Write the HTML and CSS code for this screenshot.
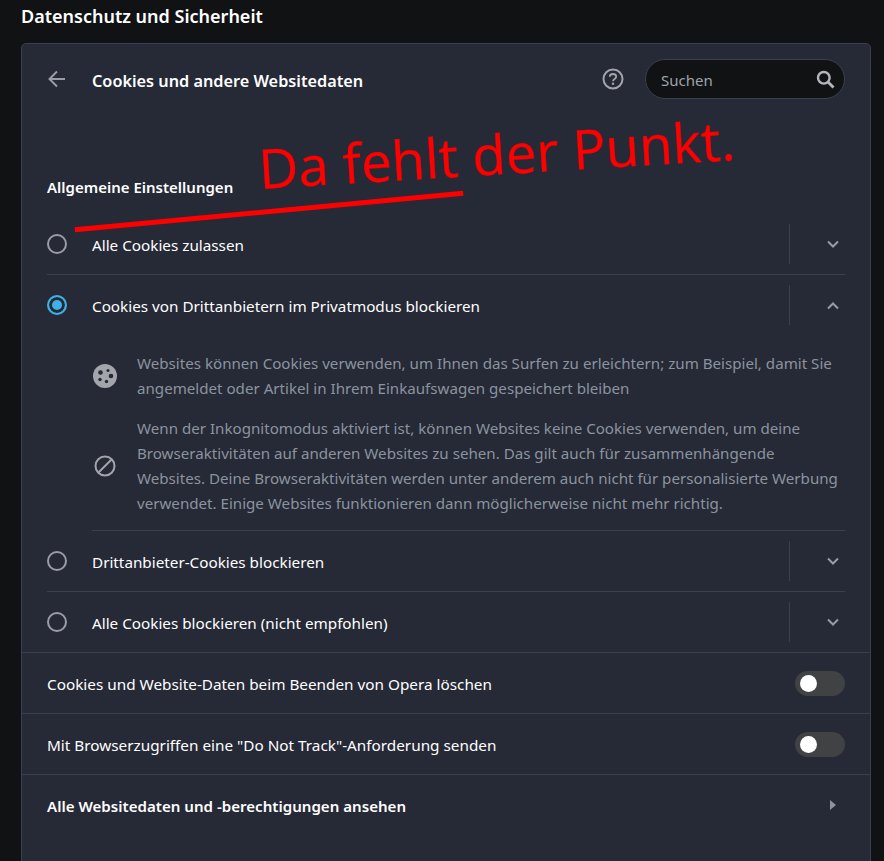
FILE: index.html
```html
<!DOCTYPE html>
<html lang="de">
<head>
    <meta charset="UTF-8">
    <title>Cookies und andere Websitedaten</title>
    <link rel="stylesheet" href="styles.css">
</head>
<body>
    <h1 class="page-title">Datenschutz und Sicherheit</h1>

    <div class="card">
        <!-- Header -->
        <div class="card-head">
            <svg class="back-icon" width="20" height="20" viewBox="0 0 20 20"><path d="M18 10H3M10 2.500 2.500 10l7.500 7.500" fill="none" stroke="#9a9ca6" stroke-width="2"/></svg>
            <h2 class="card-title">Cookies und andere Websitedaten</h2>
            <svg class="help-icon" width="22" height="22" viewBox="0 0 22 22">
                <circle cx="11" cy="11" r="9.500" fill="none" stroke="#a3a5ad" stroke-width="2"/>
                <path d="M7.800 8.800C7.800 6.800 9.300 6 11 6c1.800 0 3.200 1 3.200 2.700 0 2.300-3.200 2.300-3.200 4.500" fill="none" stroke="#a3a5ad" stroke-width="1.800"/>
                <circle cx="11" cy="15.800" r="1.200" fill="#a3a5ad"/>
            </svg>
            <div class="search">
                <span class="search-text">Suchen</span>
                <svg width="19" height="19" viewBox="0 0 19 19"><circle cx="7.800" cy="7.800" r="5.800" fill="none" stroke="#b4b6bc" stroke-width="2.400"/><path d="M12 12l5.500 5.500" stroke="#b4b6bc" stroke-width="2.800"/></svg>
            </div>
        </div>

        <h3 class="section-title">Allgemeine Einstellungen</h3>

        <!-- Radio options -->
        <div class="options">
            <div class="option">
                <span class="radio"></span>
                <span class="option-label">Alle Cookies zulassen</span>
                <span class="option-sep"></span>
                <svg class="chevron" width="14" height="9" viewBox="0 0 14 9"><path d="M2 1.500 7 6.500l5-5" fill="none" stroke="#9a9ca6" stroke-width="2"/></svg>
            </div>
            <div class="option option-open">
                <span class="radio radio-on"></span>
                <span class="option-label">Cookies von Drittanbietern im Privatmodus blockieren</span>
                <span class="option-sep"></span>
                <svg class="chevron" width="14" height="9" viewBox="0 0 14 9"><path d="M2 7.500 7 2.500l5 5" fill="none" stroke="#9a9ca6" stroke-width="2"/></svg>
            </div>
            <div class="details">
                <div class="detail">
                    <svg class="detail-icon" width="26" height="26" viewBox="0 0 26 26">
                        <circle cx="13" cy="13" r="12" fill="#a3a5ad"/>
                        <circle cx="8.500" cy="9.500" r="2.300" fill="#262936"/>
                        <circle cx="16" cy="7.500" r="1.500" fill="#262936"/>
                        <circle cx="19" cy="13" r="2.300" fill="#262936"/>
                        <circle cx="8" cy="16.500" r="1.700" fill="#262936"/>
                        <circle cx="14.500" cy="18.500" r="1.700" fill="#262936"/>
                    </svg>
                    <p>Websites können Cookies verwenden, um Ihnen das Surfen zu erleichtern; zum Beispiel, damit Sie angemeldet oder Artikel in Ihrem Einkaufswagen gespeichert bleiben</p>
                </div>
                <div class="detail">
                    <svg class="detail-icon" width="26" height="26" viewBox="0 0 26 26">
                        <circle cx="13" cy="13" r="9.500" fill="none" stroke="#a3a5ad" stroke-width="2"/>
                        <path d="M6.500 19.500l13-13" stroke="#a3a5ad" stroke-width="2"/>
                    </svg>
                    <p>Wenn der Inkognitomodus aktiviert ist, können Websites keine Cookies verwenden, um deine Browseraktivitäten auf anderen Websites zu sehen. Das gilt auch für zusammenhängende Websites. Deine Browseraktivitäten werden unter anderem auch nicht für personalisierte Werbung verwendet. Einige Websites funktionieren dann möglicherweise nicht mehr richtig.</p>
                </div>
            </div>
            <div class="option option-ruled">
                <span class="radio"></span>
                <span class="option-label">Drittanbieter-Cookies blockieren</span>
                <span class="option-sep"></span>
                <svg class="chevron" width="14" height="9" viewBox="0 0 14 9"><path d="M2 1.500 7 6.500l5-5" fill="none" stroke="#9a9ca6" stroke-width="2"/></svg>
            </div>
            <div class="option">
                <span class="radio"></span>
                <span class="option-label">Alle Cookies blockieren (nicht empfohlen)</span>
                <span class="option-sep"></span>
                <svg class="chevron" width="14" height="9" viewBox="0 0 14 9"><path d="M2 1.500 7 6.500l5-5" fill="none" stroke="#9a9ca6" stroke-width="2"/></svg>
            </div>
        </div>

        <!-- Toggles -->
        <div class="row">
            <span class="row-label">Cookies und Website-Daten beim Beenden von Opera löschen</span>
            <span class="toggle"></span>
        </div>
        <div class="row">
            <span class="row-label">Mit Browserzugriffen eine "Do Not Track"-Anforderung senden</span>
            <span class="toggle"></span>
        </div>
        <div class="row row-strong">
            <span class="row-label">Alle Websitedaten und -berechtigungen ansehen</span>
            <span class="arrow"></span>
        </div>
    </div>

    <!-- Red annotation drawn over the screenshot -->
    <div class="note-line"></div>
    <div class="note-text">Da fehlt der Punkt.</div>
</body>
</html>
```

FILE: styles.css
```css
html, body {
    height: 861px;
}

body {
    margin: 0;
    padding: 0 13px 0 21px;
    background-color: #111214;
    color: #fff;
    font-family: "Noto Sans", "Open Sans", Arial, sans-serif;
    font-size: 15.250px;
    overflow: hidden;
    position: relative;
}

.page-title {
    margin: 0;
    height: 43px;
    padding-top: 4px;
    box-sizing: border-box;
    font-size: 18px;
    line-height: 24px;
    font-weight: 600;
}

/* Card */
.card {
    height: 840px;
    box-sizing: border-box;
    background-color: #262936;
    border: 1px solid #3b4050;
    border-radius: 5px;
}

.card-head {
    display: flex;
    align-items: center;
    height: 40px;
    padding: 15px 25px 0;
}

.back-icon {
    margin-right: 25px;
}

.card-title {
    flex: 1;
    margin: 0;
    font-size: 16.250px;
    font-weight: 600;
    padding-top: 3px;
}

.help-icon {
    margin-right: 21px;
}

.search {
    display: flex;
    align-items: center;
    justify-content: space-between;
    width: 200px;
    height: 40px;
    box-sizing: border-box;
    padding: 0 9px 0 15px;
    background-color: #111214;
    border: 1px solid #3b4050;
    border-radius: 20px;
}

.search-text {
    color: #9ea4ac;
    font-size: 15px;
    padding-top: 1px;
}

.section-title {
    margin: 0;
    padding: 78px 25px 0;
    font-size: 15px;
    line-height: 20px;
    font-weight: 600;
}

/* Radio options */
.options {
    margin: 17px 25px 0;
}

.option {
    display: flex;
    align-items: center;
    height: 60px;
    border-bottom: 1px solid #3b4050;
}

.option:last-child {
    border-bottom: none;
}

.option-open {
    border-bottom: none;
}

.radio {
    width: 16px;
    height: 16px;
    margin-right: 25px;
    border: 2px solid #9a9ca6;
    border-radius: 50%;
    flex-shrink: 0;
}

.radio-on {
    border-color: #3eb1e8;
    background-color: #3eb1e8;
    box-shadow: inset 0 0 0 3px #262936;
}

.option-label {
    flex: 1;
    padding-top: 2px;
}

.option-sep {
    width: 1px;
    height: 40px;
    background-color: #3b4050;
}

.chevron {
    margin: 0 5px 0 36px;
}

/* Expanded option text */
.details {
    margin-left: 45px;
    padding: 16px 0 14px;
    border-bottom: 1px solid #3b4050;
}

.detail {
    display: flex;
    align-items: center;
    margin-bottom: 15px;
    color: #8b949e;
    font-size: 15.130px;
    line-height: 25px;
}

.detail:last-child {
    margin-bottom: 0;
}

.detail p {
    margin: 0 0 0 19px;
}

.detail-icon {
    flex-shrink: 0;
    margin-left: -0.500px;
    margin-right: 0.500px;
}

/* Full width rows */
.row {
    display: flex;
    align-items: center;
    justify-content: space-between;
    height: 60px;
    padding: 0 25px;
    border-top: 1px solid #3b4050;
    font-size: 15.300px;
}

.row-label {
    padding-top: 2px;
}

.row-strong {
    font-size: 15.100px;
    font-weight: 600;
}

.toggle {
    position: relative;
    width: 50px;
    height: 25px;
    background-color: #404244;
    border-radius: 13px;
}

.toggle::after {
    content: "";
    position: absolute;
    left: 5px;
    top: 4px;
    width: 17px;
    height: 17px;
    background-color: #fff;
    border-radius: 50%;
}

.arrow {
    width: 0;
    height: 0;
    margin-right: 9px;
    border-left: 6px solid #8f919b;
    border-top: 5.500px solid transparent;
    border-bottom: 5.500px solid transparent;
}

/* Annotation */
.note-line {
    position: absolute;
    left: 74px;
    top: 208.500px;
    width: 390px;
    height: 4.500px;
    background-color: #ff0000;
    transform: rotate(-5.370deg);
}

.note-text {
    position: absolute;
    left: 261px;
    top: 130px;
    color: #ff0000;
    font-family: "Open Sans", "Noto Sans", sans-serif;
    font-size: 54.600px;
    line-height: 76px;
    white-space: nowrap;
    -webkit-text-stroke: 0.300px #ff0000;
    transform: rotate(-3.500deg);
    transform-origin: left bottom;
}
```
